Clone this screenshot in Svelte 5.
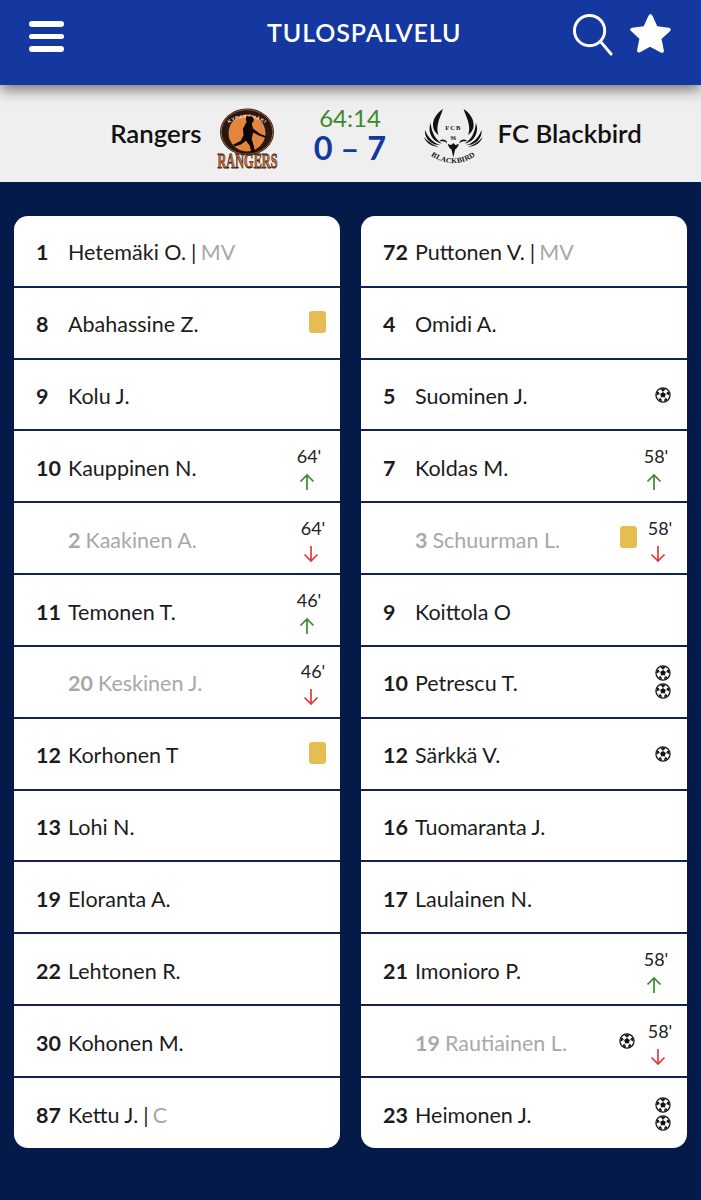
<script>
  const left = [
    { n: '1', name: 'Hetemäki O.', role: 'MV' },
    { n: '8', name: 'Abahassine Z.', card: true },
    { n: '9', name: 'Kolu J.' },
    { n: '10', name: 'Kauppinen N.', time: "64'", dir: 'up' },
    { n: '2', name: 'Kaakinen A.', time: "64'", dir: 'down', sub: true },
    { n: '11', name: 'Temonen T.', time: "46'", dir: 'up' },
    { n: '20', name: 'Keskinen J.', time: "46'", dir: 'down', sub: true },
    { n: '12', name: 'Korhonen T', card: true },
    { n: '13', name: 'Lohi N.' },
    { n: '19', name: 'Eloranta A.' },
    { n: '22', name: 'Lehtonen R.' },
    { n: '30', name: 'Kohonen M.' },
    { n: '87', name: 'Kettu J.', role: 'C' }
  ];
  const right = [
    { n: '72', name: 'Puttonen V.', role: 'MV' },
    { n: '4', name: 'Omidi A.' },
    { n: '5', name: 'Suominen J.', balls: 1 },
    { n: '7', name: 'Koldas M.', time: "58'", dir: 'up' },
    { n: '3', name: 'Schuurman L.', time: "58'", dir: 'down', sub: true, card: true },
    { n: '9', name: 'Koittola O' },
    { n: '10', name: 'Petrescu T.', balls: 2 },
    { n: '12', name: 'Särkkä V.', balls: 1 },
    { n: '16', name: 'Tuomaranta J.' },
    { n: '17', name: 'Laulainen N.' },
    { n: '21', name: 'Imonioro P.', time: "58'", dir: 'up' },
    { n: '19', name: 'Rautiainen L.', time: "58'", dir: 'down', sub: true, balls: 1 },
    { n: '23', name: 'Heimonen J.', balls: 2 }
  ];
  const teams = [left, right];
</script>

{#snippet ball()}
  <svg class="ball" viewBox="0 0 32 32" aria-hidden="true">
    <circle cx="16" cy="16" r="14.2" fill="#fff" stroke="#111" stroke-width="2.4" />
    <path d="M16 10l5.600 4-2.100 6.600h-7L10.400 14z" fill="#111" />
    <path d="M16 2.500l5.500 2.500-5.500 3.500-5.500-3.500zM28.500 10.500l1 6.500-4.500-1.500-1.500-6zM3.500 10.500l-1 6.500 4.500-1.500 1.500-6zM7.500 25.500l6 3.500 0-4-4-3zM24.500 25.500l-6 3.500 0-4 4-3z" fill="#111" />
    <path d="M16 10V7M21.600 14l3.400-1.500M19.500 20.600l2.500 2.800M12.500 20.600l-2.500 2.800M10.400 14l-3.400-1.500" stroke="#111" stroke-width="1.400" />
  </svg>
{/snippet}

{#snippet arrow(dir)}
  <svg class="arrow {dir}" viewBox="0 0 16 18" aria-hidden="true">
    {#if dir === 'up'}
      <path d="M8 17V2M1.500 8.500L8 2l6.500 6.500" />
    {:else}
      <path d="M8 1v15M1.500 9.500L8 16l6.500-6.500" />
    {/if}
  </svg>
{/snippet}

{#snippet wing()}
  <path d="M20 1C14 5 9.500 11 10 18c.3 4 2.500 7 5.500 9-1.200-3.500-1.500-7-.6-11C15.800 11 18.500 6 20 1z" />
  <path d="M7.700 15C5.500 20 6.500 26 10 30.500c2.300 2.800 5.500 4.500 9 5-3.300-2-5.800-4.500-7.800-8C9.500 24 8 20 7.700 15z" />
  <path d="M2 22c-.5 5 1.800 9.500 6 12.500 2.700 1.800 6 2.700 9 2.500-3.500-1.200-6.500-3-9-5.500C5.500 29 3.500 26 2 22z" />
  <path d="M1 29c1 3.500 3.800 6.500 7.500 8.300 2.300 1 4.800 1.500 7 1.300-3-.7-5.800-2-8.200-3.800C5 33.300 3 31.300 1 29z" />
  <path d="M16.500 33c1.500-1.600 4-2 6-.8 1.300.8 1.800 2.200 1.200 3.200-.5-1.200-1.500-1.900-2.800-2-1.500-.2-3 .2-4.400-.4z" />
{/snippet}

<div class="page">
  <header class="top">
    <button class="burger" aria-label="Menu"><i></i><i></i><i></i></button>
    <h1>TULOSPALVELU</h1>
    <div class="actions">
      <svg class="search" viewBox="0 0 42 44" aria-hidden="true">
        <circle cx="18" cy="18" r="15.500" />
        <path d="M29.500 29.500L40 42" />
      </svg>
      <svg class="star" viewBox="0 0 44 42" aria-hidden="true">
        <path d="M22 1.500c1.300 0 2 .8 2.600 2l5 11 12 1.400c2.300.3 2.800 2.300 1.300 3.700l-8.800 8.300 2.400 11.800c.4 2.100-1.400 3.200-3.200 2.200L22 35.800l-10.300 5.800c-1.800 1-3.600-.1-3.200-2.200l2.400-11.800-8.800-8.300C.6 18.200 1.100 16.200 3.400 15.900l12-1.400 5-11c.6-1.200 1.300-2 2.600-2z" />
      </svg>
    </div>
  </header>

  <section class="match">
    <div class="side home">
      <span class="team">Rangers</span>
      <svg class="logo" viewBox="0 0 62 62" aria-hidden="true">
        <ellipse cx="30" cy="24" rx="27" ry="23.500" fill="#2a1710" />
        <ellipse cx="30" cy="24" rx="25.800" ry="22.300" fill="none" stroke="#a8653a" stroke-width=".9" />
        <circle cx="30" cy="25" r="18.500" fill="#e4853f" />
        <path id="rangersArc" d="M9 20C13 7 47 7 51 20" fill="none" />
        <text class="lg-top"><textPath href="#rangersArc" startOffset="50%" text-anchor="middle">KYPARÄMÄKI</textPath></text>
        <path d="M32 8.500c3-.8 5 1 4.800 3.500-.2 1.700-1 2.700-2 3.300l1.200 5.200 7 5.300 6.500 2.700-.6 1.500-7-2.400-5.600-3-1.600 6 2.200 7.800 1 5.500-3.600.4-1.500-6.500-3.800-5-5 3.700-6.500 2-1.300-1.800 7.500-4 2.800-5.500-.6-6.500 3.800-7c-1.300-1.500-1.200-4.800.3-5.700z" fill="#0d0806" />
        <text class="lg-name" text-anchor="middle" transform="translate(30.500 60) scale(.585 1)">RANGERS</text>
      </svg>
    </div>
    <div class="score">
      <div class="clock">64:14</div>
      <div class="goals">0 – 7</div>
    </div>
    <div class="side away">
      <svg class="logo" viewBox="0 0 62 62" aria-hidden="true">
        <g fill="#111">
          {@render wing()}
          <g transform="matrix(-1 0 0 1 60.600 0)">{@render wing()}</g>
          <path d="M30.300 35l2 2 3.600-1c-.8 3-2.300 4.500-3.800 5.500l-1.800 8-1.800-8c-1.500-1-3-2.500-3.800-5.500l3.600 1z" />
        </g>
        <text class="lg-fcb" x="30.300" y="22" text-anchor="middle">FCB</text>
        <text class="lg-96" x="30.300" y="32" text-anchor="middle">96</text>
        <path id="bbArc" d="M5 45.500Q30.300 65 55.600 45.500" fill="none" />
        <text class="lg-bb"><textPath href="#bbArc" startOffset="50%" text-anchor="middle">BLACKBIRD</textPath></text>
      </svg>
      <span class="team">FC Blackbird</span>
    </div>
  </section>

  <main class="lineups">
    {#each teams as team}
      <ul class="card">
        {#each team as p}
          <li class="row" class:sub={p.sub}>
            <span class="no">{p.n}</span>
            <span class="name">{p.name}{#if p.role}<span class="bar">{' | '}</span><span class="role">{p.role}</span>{/if}</span>
            <span class="extras">
              {#if p.card}<span class="yellow"></span>{/if}
              {#if p.balls}
                <span class="balls">
                  {#each { length: p.balls } as _}{@render ball()}{/each}
                </span>
              {/if}
              {#if p.time}
                <span class="change">
                  <span class="time">{p.time}</span>
                  {@render arrow(p.dir)}
                </span>
              {/if}
            </span>
          </li>
        {/each}
      </ul>
    {/each}
  </main>
</div>

<style>
  :global(body) {
    margin: 0;
    background: #041a48;
  }
  .page {
    height: 1200px;
    background: #041a48;
    font-family: Lato, "Liberation Sans", sans-serif;
    color: #1c1c1c;
    overflow: hidden;
  }
  .top {
    position: relative;
    z-index: 1;
    height: 85px;
    background: #1537a0;
    box-shadow: 0 4px 14px rgba(0, 0, 0, 0.55);
    display: grid;
    grid-template-columns: 238px auto 1fr;
    padding: 0 30px 0 29px;
    box-sizing: border-box;
  }
  .burger {
    display: flex;
    flex-direction: column;
    gap: 7px;
    width: 35px;
    padding: 21px 0 0;
    background: none;
    border: 0;
  }
  .burger i {
    display: block;
    height: 5.500px;
    border-radius: 3px;
    background: #fff;
  }
  h1 {
    margin: 0;
    padding: 17px 0 0;
    color: #fff;
    font-size: 25px;
    font-weight: 600;
    line-height: 30px;
    letter-spacing: 0.9px;
  }
  .actions {
    display: flex;
    justify-content: flex-end;
    align-items: flex-start;
    gap: 16px;
  }
  .search {
    width: 41px;
    height: 43px;
    margin-top: 13px;
    fill: none;
    stroke: #fff;
    stroke-width: 3px;
    stroke-linecap: round;
  }
  .star {
    width: 42px;
    height: 41px;
    margin-top: 12px;
    fill: #fff;
  }
  .match {
    height: 97px;
    background: #efefef;
    display: grid;
    grid-template-columns: 1fr 144px 1fr;
    align-items: center;
  }
  .side {
    display: flex;
    align-items: center;
    gap: 15px;
  }
  .home {
    justify-content: flex-end;
  }
  .away {
    gap: 13px;
  }
  .team {
    font-size: 25.800px;
    font-weight: 600;
    color: #111;
    line-height: 30px;
    margin-top: -2px;
  }
  .logo {
    width: 62px;
    height: 62px;
    flex: none;
    margin-top: 11px;
    overflow: visible;
  }
  .lg-top {
    font: 700 4.800px "Liberation Sans", sans-serif;
    letter-spacing: 0.6px;
    fill: #eadfce;
  }
  .lg-name {
    font: 700 21px "Liberation Serif", serif;
    fill: #d5743a;
    stroke: #3a1c0e;
    stroke-width: 0.8px;
  }
  .lg-fcb {
    font: 700 6.500px "Liberation Serif", serif;
    letter-spacing: 1px;
    fill: #222;
  }
  .lg-96 {
    font: 700 5.500px "Liberation Serif", serif;
    fill: #222;
  }
  .lg-bb {
    font: 700 7.500px "Liberation Serif", serif;
    letter-spacing: 0.3px;
    fill: #111;
  }
  .score {
    text-align: center;
    padding: 2px 1px 0 0;
  }
  .clock {
    font-size: 24px;
    line-height: 26px;
    color: #3b8a2d;
  }
  .goals {
    font-size: 32.500px;
    font-weight: 700;
    line-height: 34px;
    color: #1537a0;
  }
  .lineups {
    display: grid;
    grid-template-columns: 326px 326px;
    justify-content: space-between;
    padding: 34px 14px 0;
    width: 701px;
    box-sizing: border-box;
  }
  .card {
    list-style: none;
    margin: 0;
    padding: 0;
    height: 932px;
    background: #fff;
    border-radius: 14px;
    overflow: hidden;
  }
  .row {
    height: 71.830px;
    box-sizing: border-box;
    border-bottom: 2px solid #12234f;
    display: flex;
    align-items: center;
    padding-left: 22px;
    padding-top: 3px;
    font-size: 21.500px;
  }
  .row:last-child {
    border-bottom: 0;
  }
  .no {
    width: 32px;
    flex: none;
    font-weight: 700;
  }
  .name {
    flex: 1;
    white-space: nowrap;
  }
  .bar {
    white-space: pre;
    letter-spacing: -0.6px;
  }
  .role {
    color: #a8a8a8;
  }
  .sub .no {
    width: auto;
    margin-left: 32px;
    margin-right: 5px;
    color: #a8a8a8;
  }
  .sub .name {
    color: #a8a8a8;
  }
  .extras {
    display: flex;
    align-items: center;
    justify-content: flex-end;
    gap: 10px;
    padding-right: 14px;
    flex: none;
    margin-top: -3px;
  }
  .yellow {
    display: block;
    width: 17px;
    height: 22px;
    border-radius: 3px;
    background: #e6bd52;
    margin-top: -2px;
  }
  .balls {
    display: flex;
    flex-direction: column;
    gap: 2px;
    padding-right: 2px;
  }
  .ball {
    display: block;
    width: 16px;
    height: 16px;
  }
  .change {
    display: flex;
    flex-direction: column;
    align-items: center;
    width: 26px;
    margin-right: 4px;
    font-size: 18px;
    line-height: 22px;
    color: #222;
    margin-top: 3px;
  }
  .sub .change {
    margin-right: 0;
  }
  .arrow {
    width: 16px;
    height: 18px;
    margin: 6px 5px 0 0;
    fill: none;
    stroke-width: 1.700px;
  }
  .arrow.up {
    stroke: #3b8a2d;
  }
  .arrow.down {
    stroke: #e23b36;
  }
</style>
